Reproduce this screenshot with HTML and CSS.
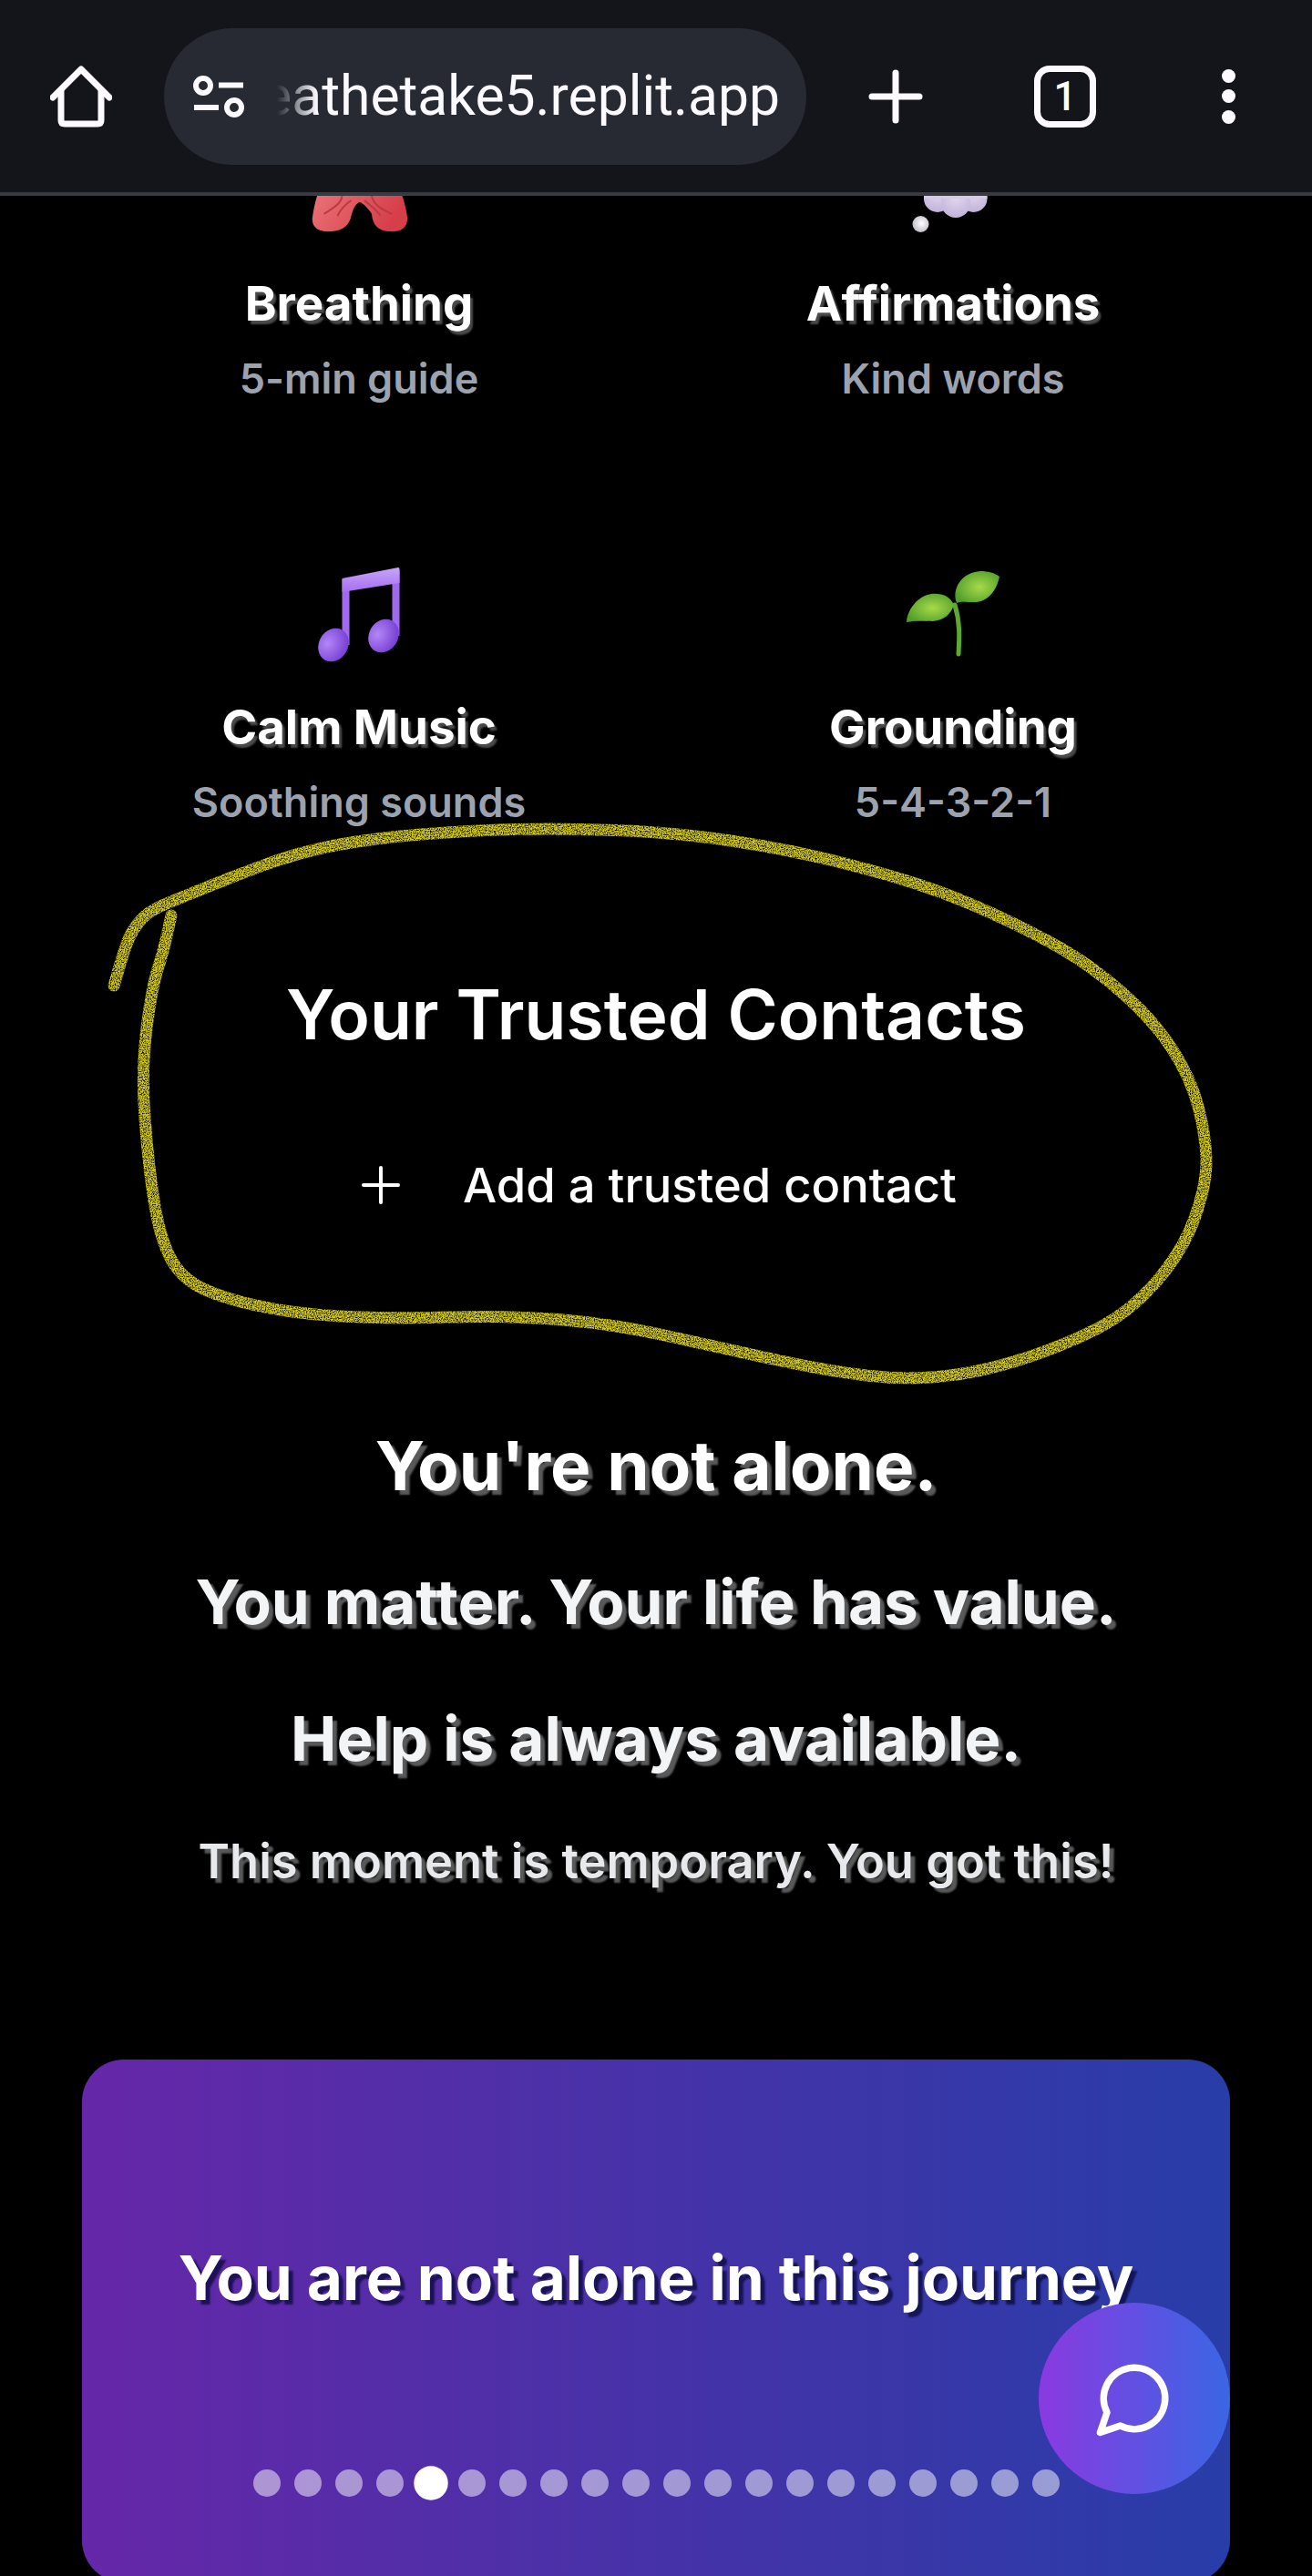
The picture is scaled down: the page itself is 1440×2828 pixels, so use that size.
FILE: index.html
```html
<!DOCTYPE html>
<html lang="en">
<head>
    <meta charset="UTF-8">
    <meta name="viewport" content="width=device-width, initial-scale=1.0">
    <title>Breathe, Take 5</title>
    <link rel="stylesheet" href="styles.css">
</head>
<body>

    <header class="toolbar">
        <svg class="tool-home" width="68" height="68" viewBox="0 0 68 68" fill="none" stroke="#fcfaff" stroke-width="7" stroke-linejoin="round" stroke-linecap="round">
            <path d="M3 35 L34 4 L65 35"/>
            <path d="M12 28 V60 Q12 64 16 64 H52 Q56 64 56 60 V28"/>
        </svg>
        <div class="url-pill">
            <svg class="url-tune" width="56" height="46" viewBox="0 0 56 46" fill="none" stroke="#fcfaff" stroke-width="6">
                <circle cx="11" cy="11" r="8"/>
                <path d="M28 10.5 H55"/>
                <path d="M1 35 H28"/>
                <circle cx="45" cy="35" r="8"/>
            </svg>
            <div class="url-clip"><span class="url-text">eathetake5.replit.app</span></div>
        </div>
        <svg class="tool-plus" width="60" height="60" viewBox="0 0 60 60" stroke="#fcfaff" stroke-width="7" stroke-linecap="round">
            <path d="M30 4 V56"/>
            <path d="M4 30 H56"/>
        </svg>
        <div class="tab-count">1</div>
        <div class="tool-menu">
            <span></span><span></span><span></span>
        </div>
    </header>

    <main class="page">
        <section class="features">
            <div class="feature">
                <svg class="feature-icon" width="120" height="130" viewBox="0 0 120 130">
                    <defs>
                        <linearGradient id="lungFill" x1="0" y1="0" x2="1" y2="0.6">
                            <stop offset="0" stop-color="#f08286"/>
                            <stop offset="1" stop-color="#d63f49"/>
                        </linearGradient>
                    </defs>
                    <path d="M45 22 C30 30 14 60 9 95 C7 108 18 112 30 111 C42 110 50 105 52 92 C54 85 57 80 61 79 C65 80 72 88 74 92 C75 105 82 110 92 111 C105 112 114 108 113 95 C110 70 92 30 77 22 Z" fill="url(#lungFill)"/>
                    <path d="M41.5 72 C40 82 30 86 21.5 92 M51.5 77 C44 82 40 86 36.5 94 M74 72 C76 82 84 86 96 92 M66 77 C72 82 78 86 84 94" stroke="#b93a42" stroke-width="2" fill="none"/>
                </svg>
                <div class="feature-title">Breathing</div>
                <div class="feature-sub">5-min guide</div>
            </div>
            <div class="feature">
                <svg class="feature-icon" width="120" height="130" viewBox="0 0 120 130">
                    <defs>
                        <radialGradient id="puffFill" cx="0.5" cy="0.3" r="0.7">
                            <stop offset="0" stop-color="#e2d8ef"/>
                            <stop offset="1" stop-color="#c2b2da"/>
                        </radialGradient>
                        <radialGradient id="pearlFill" cx="0.55" cy="0.45" r="0.6">
                            <stop offset="0" stop-color="#ffffff"/>
                            <stop offset="1" stop-color="#bdb9c2"/>
                        </radialGradient>
                    </defs>
                    <circle cx="43" cy="75" r="15" fill="url(#puffFill)"/>
                    <circle cx="82.5" cy="75" r="15" fill="url(#puffFill)"/>
                    <circle cx="63" cy="80" r="16" fill="url(#puffFill)"/>
                    <rect x="28" y="30" width="69.5" height="45" fill="#d6cae8"/>
                    <circle cx="24.5" cy="103" r="9" fill="url(#pearlFill)"/>
                </svg>
                <div class="feature-title">Affirmations</div>
                <div class="feature-sub">Kind words</div>
            </div>
            <div class="feature">
                <svg class="feature-icon" width="120" height="130" viewBox="0 0 120 130">
                    <defs>
                        <linearGradient id="beamFill" x1="0" y1="0" x2="0" y2="1">
                            <stop offset="0" stop-color="#c9a4f8"/>
                            <stop offset="1" stop-color="#a56ff0"/>
                        </linearGradient>
                        <radialGradient id="noteFill" cx="0.45" cy="0.3" r="0.75">
                            <stop offset="0" stop-color="#b287f5"/>
                            <stop offset="1" stop-color="#7238d2"/>
                        </radialGradient>
                    </defs>
                    <rect x="41.5" y="28" width="8" height="72" fill="#a169ee"/>
                    <rect x="96.5" y="18" width="8" height="72" fill="#a169ee"/>
                    <path d="M41.5 27 L103 15 Q104.5 15 104.5 17 V32 L41.5 42 Z" fill="url(#beamFill)"/>
                    <ellipse cx="32" cy="100" rx="19" ry="16" transform="rotate(-60 32 100)" fill="url(#noteFill)"/>
                    <ellipse cx="87" cy="90" rx="19" ry="16" transform="rotate(-60 87 90)" fill="url(#noteFill)"/>
                </svg>
                <div class="feature-title">Calm Music</div>
                <div class="feature-sub">Soothing sounds</div>
            </div>
            <div class="feature">
                <svg class="feature-icon" width="120" height="130" viewBox="0 0 120 130">
                    <defs>
                        <radialGradient id="leafFill" cx="0.55" cy="0.5" r="0.6">
                            <stop offset="0" stop-color="#a8d94a"/>
                            <stop offset="1" stop-color="#4f9e2a"/>
                        </radialGradient>
                    </defs>
                    <path d="M62 56 C68 76 67 92 66 110" stroke="#5ea832" stroke-width="5" stroke-linecap="round" fill="none"/>
                    <path d="M64 54 C58 38 70 20 90 19 C98 19 106 21 111 25 C108 40 98 54 82 53 C74 53 68 52 64 54 Z" fill="url(#leafFill)"/>
                    <path d="M61 56 C56 46 48 43 36 44 C22 46 10 60 9 75 C20 73 28 74 38 74 C50 73 58 66 61 56 Z" fill="url(#leafFill)"/>
                </svg>
                <div class="feature-title">Grounding</div>
                <div class="feature-sub">5-4-3-2-1</div>
            </div>
        </section>

        <section class="contacts">
            <h2>Your Trusted Contacts</h2>
            <div class="add-contact">
                <svg width="44" height="44" viewBox="0 0 44 44" stroke="#ffffff" stroke-width="4" stroke-linecap="round">
                    <path d="M22 3 V41"/>
                    <path d="M3 22 H41"/>
                </svg>
                <span>Add a trusted contact</span>
            </div>
        </section>

        <section class="comfort">
            <p class="comfort-big">You're not alone.</p>
            <p class="comfort-mid">You matter. Your life has value.</p>
            <p class="comfort-mid">Help is always available.</p>
            <p class="comfort-small">This moment is temporary. You got this!</p>
        </section>

        <section class="quote-card">
            <div class="quote-text">You are not alone in this journey</div>
            <div class="quote-dots">
                <span></span><span></span><span></span><span></span><span class="active"></span>
                <span></span><span></span><span></span><span></span><span></span>
                <span></span><span></span><span></span><span></span><span></span>
                <span></span><span></span><span></span><span></span><span></span>
            </div>
        </section>
    </main>

    <!-- pen scribble drawn on top of the screenshot -->
    <svg class="scribble" width="1440" height="2828" viewBox="0 0 1440 2828" fill="none">
        <defs>
            <filter id="grain" filterUnits="userSpaceOnUse" x="0" y="800" width="1440" height="800">
                <feTurbulence type="fractalNoise" baseFrequency="0.8" numOctaves="2" result="noise"/>
                <feColorMatrix in="noise" type="matrix" values="0 0 0 0 0  0 0 0 0 0  0 0 0 0 0  3 0 0 0 -0.75" result="specks"/>
                <feComposite in="SourceGraphic" in2="specks" operator="in"/>
            </filter>
        </defs>
        <path filter="url(#grain)" stroke="#d6cc1c" stroke-width="13" stroke-linecap="round" stroke-linejoin="round"
            d="M125 1082 Q137 1040 141.5 1030 Q146 1020 154.5 1010 Q163 1000 181.5 992.5 Q200 985 223 975.5 Q246 966 287.5 950.5 Q329 935 370.5 927.5 Q412 920 461.5 916 Q511 912 561 910.5 Q611 909 677 911.5 Q743 914 805.5 923.5 Q868 933 921.5 946.5 Q975 960 1012.5 972.5 Q1050 985 1091.5 1004 Q1133 1023 1166 1042 Q1199 1061 1232.5 1090.5 Q1266 1120 1286.5 1151.5 Q1307 1183 1315.5 1216.5 Q1324 1250 1324 1275.5 Q1324 1301 1311.5 1336.5 Q1299 1372 1270 1406 Q1241 1440 1203.5 1459 Q1166 1478 1120.5 1492.5 Q1075 1507 1033.5 1511 Q992 1515 950.5 1510 Q909 1505 855 1493.5 Q801 1482 739 1468 Q677 1454 619 1449 Q561 1444 494.5 1446 Q428 1448 374 1445 Q320 1442 278.5 1432.5 Q237 1423 216.5 1411.5 Q196 1400 185.5 1378 Q175 1356 169 1318 Q163 1280 159 1227.5 Q155 1175 161 1128.5 Q167 1082 173.5 1062.5 Q180 1043 188 1005"/>
    </svg>

    <button class="chat-fab" aria-label="Open chat">
        <svg width="90" height="90" viewBox="0 0 24 24" fill="none" stroke="#ffffff" stroke-width="2" stroke-linecap="round" stroke-linejoin="round">
            <path d="M7.9 20A9 9 0 1 0 4 16.1L2 22Z"/>
        </svg>
    </button>

</body>
</html>
```

FILE: styles.css
```css
* {
    box-sizing: border-box;
}

html,
body {
    height: 2828px;
}

body {
    margin: 0;
    background: #000;
    color: #fff;
    font-family: "Inter", "Liberation Sans", sans-serif;
    overflow: hidden;
}

.toolbar {
    position: relative;
    z-index: 2;
    display: flex;
    align-items: center;
    height: 215px;
    padding-left: 55px;
    background: #14151a;
    border-bottom: 4px solid #3a3b42;
}

.url-pill {
    display: flex;
    align-items: center;
    width: 705px;
    height: 150px;
    margin-left: 57px;
    padding-left: 32px;
    background: #272a33;
    border-radius: 75px;
}

.url-clip {
    display: flex;
    justify-content: flex-end;
    width: 582px;
    margin-left: 6px;
    overflow: hidden;
    -webkit-mask-image: linear-gradient(90deg, transparent 30px, #000 74px);
    mask-image: linear-gradient(90deg, transparent 30px, #000 74px);
}

.url-text {
    flex: none;
    font-family: "Roboto", sans-serif;
    font-size: 60.6px;
    line-height: 80px;
    color: #fcfaff;
}

.tool-plus {
    margin-left: 68px;
}

.tab-count {
    display: flex;
    align-items: center;
    justify-content: center;
    width: 68px;
    height: 68px;
    margin-left: 122px;
    border: 7px solid #fcfaff;
    border-radius: 17px;
    font-family: "Roboto", sans-serif;
    font-size: 44px;
    font-weight: 500;
}

.tool-menu {
    display: flex;
    flex-direction: column;
    gap: 7.5px;
    margin-left: 138px;
}

.tool-menu span {
    width: 15px;
    height: 15px;
    border-radius: 50%;
    background: #fcfaff;
}

.page {
    height: 2613px;
    padding: 0 90px;
    overflow: hidden;
}

.features {
    display: grid;
    grid-template-columns: 1fr 1fr;
    column-gap: 44px;
    row-gap: 156px;
    margin-top: -72px;
}

.feature {
    display: flex;
    flex-direction: column;
    align-items: center;
}

.feature-icon {
    display: block;
    margin-bottom: 22px;
}

.feature-title {
    font-size: 52.8px;
    line-height: 76px;
    font-weight: 700;
    text-shadow: 3px 4px 2px #4a4a4a;
}

.feature-sub {
    margin-top: 9px;
    font-size: 45px;
    line-height: 72px;
    font-weight: 600;
    color: #9ca3af;
}

.contacts {
    margin-top: 147px;
    text-align: center;
}

.contacts h2 {
    margin: 0;
    font-size: 75px;
    line-height: 100px;
    font-weight: 600;
}

.add-contact {
    display: flex;
    align-items: center;
    justify-content: center;
    gap: 68px;
    margin-top: 97px;
    padding-left: 6px;
    font-size: 52.5px;
    line-height: 80px;
    font-weight: 500;
}

.comfort {
    margin-top: 218px;
    text-align: center;
}

.comfort p {
    margin: 50px 0 0;
    font-weight: 700;
    color: #f3f4f6;
    text-shadow: 5px 5px 2px #595959;
}

.comfort .comfort-big {
    margin-top: 0;
    font-size: 74.6px;
    line-height: 100px;
    color: #fff;
}

.comfort .comfort-mid {
    font-size: 67.4px;
    line-height: 100px;
}

.comfort .comfort-small {
    font-size: 52.4px;
    line-height: 68px;
    font-weight: 600;
    color: #e8e9ec;
}

.quote-card {
    height: 574px;
    margin-top: 184px;
    padding-top: 195px;
    border-radius: 46px;
    background: linear-gradient(90deg, #6527a8, #283da8);
    text-align: center;
}

.quote-text {
    font-size: 67.4px;
    line-height: 90px;
    font-weight: 700;
    text-shadow: 5px 5px 2px rgba(10, 10, 60, 0.75);
}

.quote-dots {
    display: flex;
    align-items: center;
    justify-content: center;
    gap: 15px;
    height: 38px;
    margin-top: 161px;
}

.quote-dots span {
    width: 30px;
    height: 30px;
    border-radius: 50%;
    background: rgba(255, 255, 255, 0.5);
}

.quote-dots .active {
    background: #fff;
    transform: scale(1.25);
}

.scribble {
    position: absolute;
    top: 0;
    left: 0;
    z-index: 1;
    pointer-events: none;
}

.chat-fab {
    position: fixed;
    right: 90px;
    bottom: 90px;
    z-index: 3;
    display: flex;
    align-items: center;
    justify-content: center;
    width: 210px;
    height: 210px;
    border: none;
    border-radius: 50%;
    background: linear-gradient(90deg, #8a3ae0, #3a66e4);
}
```
